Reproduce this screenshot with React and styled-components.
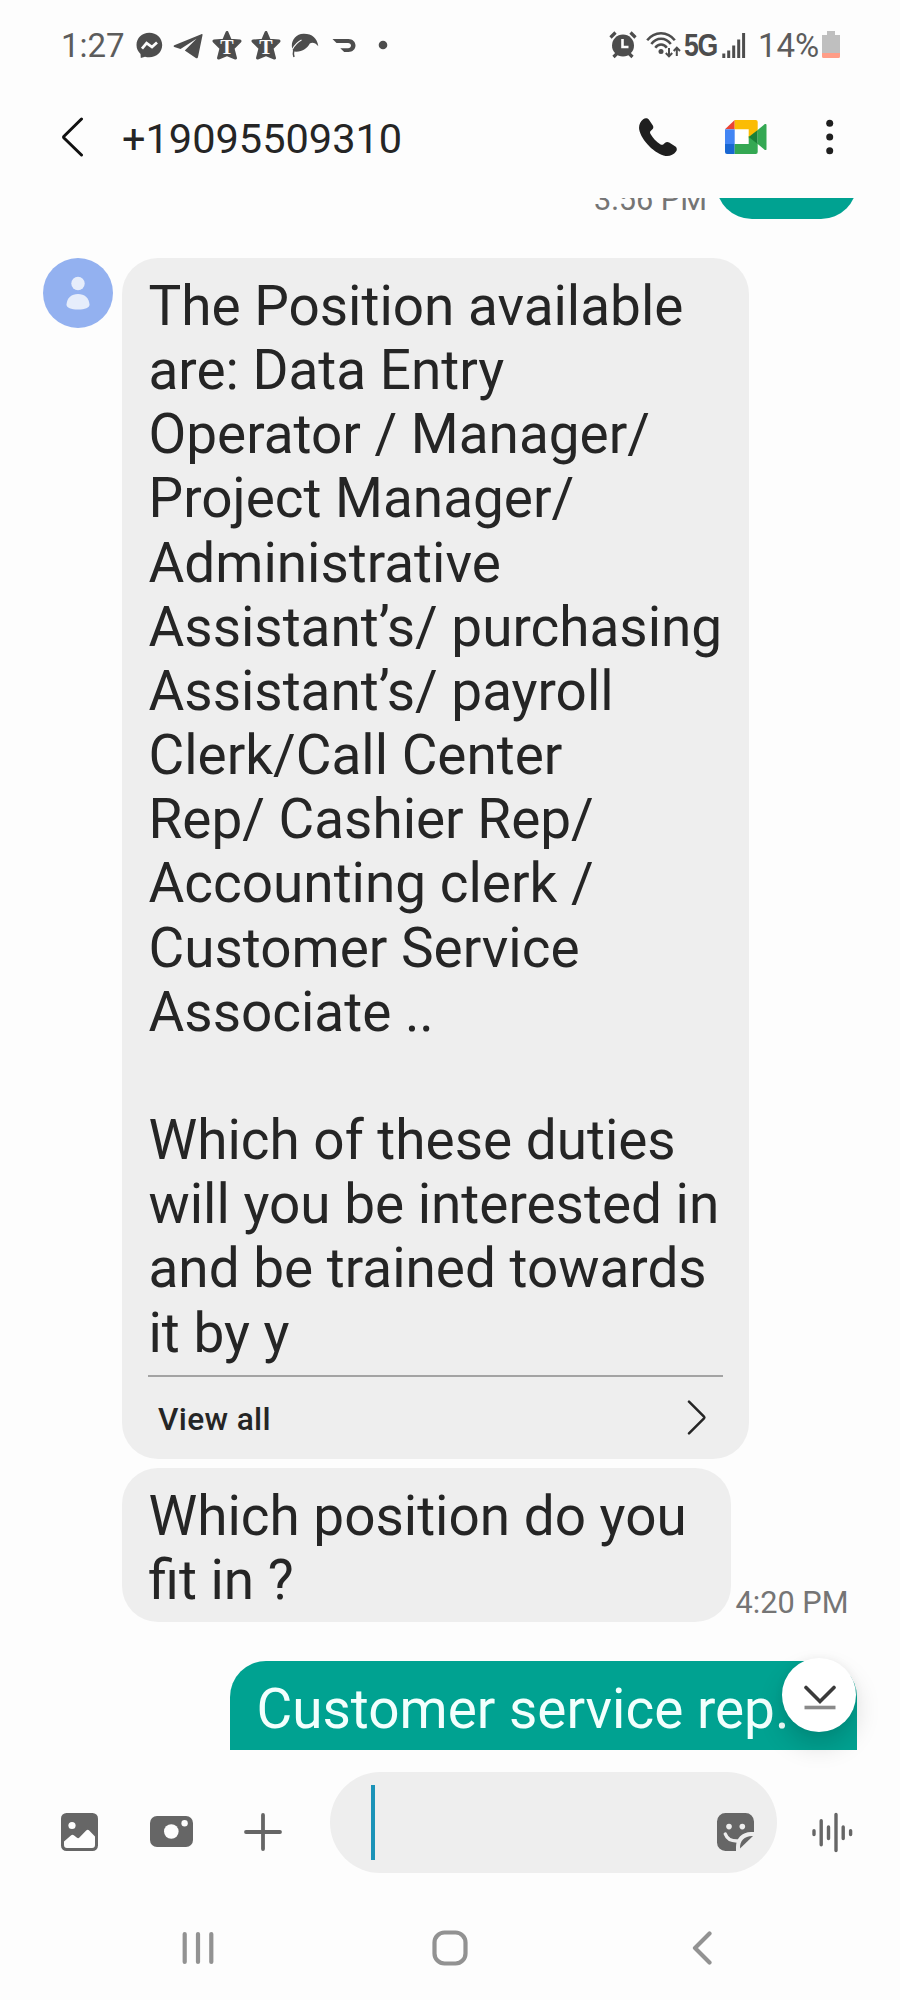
import React from 'react';
import styled, { createGlobalStyle } from 'styled-components';

const GlobalStyle = createGlobalStyle`
  * {
    box-sizing: border-box;
  }

  body {
    margin: 0;
    background: #fdfdfd;
    font-family: Roboto, "Noto Sans", sans-serif;
    color: #252525;
  }

  svg {
    display: block;
    flex: none;
  }
`

const ScreenSC = styled.div`
  display: flex;
  flex-direction: column;
  width: 900px;
  height: 2000px;
  overflow: hidden;
`

const StatusBarSC = styled.div`
  display: flex;
  align-items: center;
  justify-content: space-between;
  height: 90px;
  padding: 0 60px 0 61px;
  color: #4d4d4d;
`

const StatusGroupSC = styled.div`
  display: flex;
  align-items: center;
  gap: ${props => props.$gap}px;
`

const StatusTextSC = styled.span`
  flex: none;
  width: ${props => props.$width}px;
  margin-left: ${props => props.$indent || 0}px;
  font-size: 33px;
  line-height: 38px;
  padding-top: 1px;
  white-space: nowrap;
  color: #5c5c5c;
`

const NetworkSC = styled.span`
  flex: none;
  width: 33px;
  margin-left: -2px;
  padding-top: 1px;
  font-family: "Liberation Sans", Arial, sans-serif;
  font-size: 31px;
  line-height: 38px;
  font-weight: 700;
  letter-spacing: -1.5px;
  white-space: nowrap;

  span {
    display: inline-block;
    transform: scaleX(0.86);
    transform-origin: left;
  }
`

const HeaderSC = styled.header`
  display: flex;
  align-items: center;
  height: 108px;
  padding: 0 65px 14px 61px;
`

const NumberSC = styled.h1`
  flex: 1;
  margin: 0 0 0 38px;
  padding-top: 3px;
  font-size: 41.5px;
  line-height: 48px;
  font-weight: 400;
`

const ActionsSC = styled.div`
  display: flex;
  align-items: center;
  gap: 48px;
`

const ChatSC = styled.main`
  position: relative;
  height: 1552px;
`

const MessagesSC = styled.div`
  display: flex;
  flex-direction: column;
  gap: 39px;
  height: 100%;
  padding: 0 43px;
  overflow: hidden;
`

const SentRowSC = styled.div`
  display: flex;
  flex: none;
  justify-content: flex-end;
  align-items: flex-end;
  gap: 9px;
  height: ${props => props.$visible ? `${props.$visible}px` : "auto"};
`

const ReceivedRowSC = styled.div`
  display: flex;
  flex: none;
  align-items: flex-start;
  gap: 9px;
`

const StackSC = styled.div`
  display: flex;
  flex-direction: column;
  align-items: flex-start;
  gap: 9px;
`

const TimedSC = styled.div`
  display: flex;
  align-items: flex-end;
  gap: 4.5px;
`

const BubbleSC = styled.div`
  width: ${props => props.$width}px;
  min-height: ${props => props.$sent ? 150 : 80}px;
  padding: 16px 26px ${props => props.$flush ? 0 : 10}px;
  border-radius: 36px;
  background: ${props => props.$sent ? "#00a291" : "#eeeeee"};
  color: ${props => props.$sent ? "#f2fffd" : "#252525"};
`

const TextSC = styled.p`
  margin: 0;
  padding-left: 0.5px;
  font-size: 54.9px;
  line-height: 64.15px;
  white-space: pre;
`

const TimeSC = styled.span`
  padding-bottom: 1px;
  font-size: 30.7px;
  line-height: 36px;
  white-space: nowrap;
  color: #757575;
`

const ViewAllSC = styled.div`
  display: flex;
  align-items: center;
  justify-content: space-between;
  height: 84px;
  margin-top: 10px;
  padding: 0 17px 0 10px;
  border-top: 2px solid #a3a3a3;
  font-size: 31.7px;
  line-height: 36px;
  font-weight: 500;
  letter-spacing: 0.35px;

  span {
    padding-top: 5px;
  }
`

const JumpDownSC = styled.button`
  position: absolute;
  right: 44px;
  bottom: 18px;
  display: flex;
  align-items: center;
  justify-content: center;
  width: 74px;
  height: 74px;
  padding: 4px 0 0 1px;
  border: 0;
  border-radius: 50%;
  background: #fff;
  box-shadow: 0 14px 26px rgba(0, 0, 0, 0.15), 0 0 10px rgba(0, 0, 0, 0.05);
`

const ComposerSC = styled.div`
  display: flex;
  align-items: flex-end;
  height: 123px;
  padding: 0 47px 0 61px;
`

const ToolsSC = styled.div`
  display: flex;
  align-items: center;
  gap: 51.5px;
  width: 269px;
  padding-bottom: 22px;
`

const InputSC = styled.div`
  display: flex;
  align-items: flex-end;
  justify-content: space-between;
  width: 447px;
  height: 101px;
  margin-right: 35px;
  padding: 0 23px 22px 41px;
  border-radius: 51px;
  background: #eeeeee;
`

const CaretSC = styled.span`
  width: 4px;
  height: 75px;
  margin-bottom: -9px;
  background: #1b93b8;
`

const VoiceSC = styled.div`
  padding-bottom: 20px;
`

const NavBarSC = styled.nav`
  display: grid;
  grid-template-columns: repeat(3, 252px);
  justify-content: center;
  justify-items: center;
  align-items: center;
  height: 127px;
  padding: 22px 1px 0 0;
`

const POSITIONS = `The Position available
are: Data Entry
Operator / Manager/
Project Manager/
Administrative
Assistant’s/ purchasing
Assistant’s/ payroll
Clerk/Call Center
Rep/ Cashier Rep/
Accounting clerk /
Customer Service
Associate ..

Which of these duties
will you be interested in
and be trained towards
it by y`

const MessengerIcon = () => (
  <svg width="27" height="30" viewBox="0 0 27 30" fill="currentColor">
    <path d="M13.3 2.7C6 2.7.5 8 .5 15c0 3.7 1.6 6.7 4 8.900l.3 4.200 4.200-1.400c1.400.4 2.800.6 4.300.6 7.300 0 12.900-5.300 12.900-12.300S20.600 2.700 13.300 2.700z" />
    <path d="M6 18.700l4.600-5.600 5.400 4 5-4.600" fill="none" stroke="#fdfdfd" strokeWidth="2.700" />
  </svg>
)

const TelegramIcon = () => (
  <svg width="31" height="30" viewBox="-1 0 31 30" fill="currentColor">
    <path d="M28.300 4.200L1.300 15.200c-1 .4-1 1.300 0 1.700l6.200 2 16-10.200L11.800 20.500 22.800 28c1 .6 1.900.3 2.200-1L29.500 5.300c.2-1-.3-1.500-1.200-1.100z" />
  </svg>
)

const StarIcon = () => (
  <svg width="30" height="30" viewBox="0.500 0 30 30" fill="currentColor">
    <path
      d="M15.500 2.500L18.800 10.300l9.700.8-7 7.200 2.500 9.700-8.500-3.400L7 28l2.500-9.700-7-7.200 9.700-.8z"
      stroke="currentColor"
      strokeWidth="3"
      strokeLinejoin="round"
    />
    <text x="15.500" y="24" fill="#fdfdfd" fontFamily="Liberation Serif, serif" fontWeight="700" fontSize="20" textAnchor="middle">T</text>
  </svg>
)

const LeafIcon = () => (
  <svg width="29" height="30" viewBox="0 0 29 30">
    <path d="M3.500 21.500C-1 14 4 4 13.500 3.800 22 3.600 27 8 28.300 16.200 25.500 13 22.500 12 19.800 13.500 17 18.500 12 22.500 3.500 21.500z" fill="currentColor" />
    <path d="M2.200 19.500C5 14.500 7.500 12 11.500 10" fill="none" stroke="#fdfdfd" strokeWidth="1.200" />
    <path d="M4 27c-.8-2.500-.8-4.500-.2-7" fill="none" stroke="currentColor" strokeWidth="1.500" />
  </svg>
)

const DashIcon = () => (
  <svg width="28" height="30" viewBox="-4 0 28 30" fill="currentColor">
    <path d="M.5 9H16.500c4 0 7 2.900 7 6.500S20.500 22 16.500 22H12.200L8.300 18.200H16c1.700 0 3-1 3-2.600 0-1.500-1.300-2.600-3-2.600H4.500z" />
  </svg>
)

const DotIcon = () => (
  <svg width="27" height="30" viewBox="0 0 27 30" fill="currentColor">
    <circle cx="18" cy="15" r="4.300" />
  </svg>
)

const AlarmIcon = () => (
  <svg width="32" height="30" viewBox="0 0 32 30">
    <circle cx="14" cy="15.500" r="11" fill="currentColor" />
    <path d="M1.500 7.500l5-5M26.500 7.500l-5-5M4.500 27l3.500-3.500M23.500 27L20 23.500" stroke="currentColor" strokeWidth="3.200" />
    <path d="M13.500 9v8h6" fill="none" stroke="#fdfdfd" strokeWidth="2.600" />
  </svg>
)

const WifiIcon = () => (
  <svg width="35" height="30" viewBox="0 0 35 30" fill="none" stroke="currentColor" strokeWidth="2.500">
    <path d="M1.200 10.200C8.500.8 21.500.8 28.800 10.200M5.300 14c5.300-7 14.200-7 19.500 0M9.300 17.800c3-4.300 8.500-4.300 11.500 0" />
    <circle cx="15" cy="21.500" r="2.500" fill="currentColor" stroke="none" />
    <path d="M23 18v8M19.800 23l3.200 3.400 3.200-3.400M30.800 26v-8M27.700 21l3.100-3.400L34 21" strokeWidth="2" />
  </svg>
)

const SignalIcon = () => (
  <svg width="24" height="30" viewBox="0 0 24 30" stroke="currentColor" strokeWidth="3">
    <path d="M1.800 23.500V28M6.700 20.500V28M11.700 15.500V28M16.700 9.500V28M21.600 3V28" />
  </svg>
)

const BatteryIcon = () => (
  <svg width="18" height="30" viewBox="0 0 18 30">
    <path d="M5 1h8v4h5v19H0V5h5z" fill="#bfbfbf" />
    <path d="M0 23h18v3.500a1.500 1.500 0 0 1-1.500 1.500h-15A1.500 1.500 0 0 1 0 26.500z" fill="#ff9d87" />
  </svg>
)

const BackIcon = () => (
  <svg width="23" height="40" viewBox="0 0 23 40" fill="none" stroke="#111" strokeWidth="3" strokeLinecap="round" strokeLinejoin="round">
    <path d="M20.500 2L3 19.200q-.8.900 0 1.800L20.500 38" />
  </svg>
)

const PhoneIcon = () => (
  <svg width="38" height="39" viewBox="0 0 38 39" fill="#1f1f1f">
    <path d="M4.200 1.200C6-.2 8.600 0 9.800 1.600l3.900 5.600c1 1.600.8 3.100-.5 4.300l-1.800 1.700c-.5.700-.5 1.500 0 2.500 2.300 4.200 5.900 8 10.200 10.700 1 .6 1.800.6 2.600 0l1.900-1.600c1.200-1.100 2.700-1.200 4.100-.2l6.200 4c1.600 1.200 1.900 3.400.6 5-2.400 3.400-6 4.800-10.400 4.400C16 36 2 22 .2 11.400-.4 7.200 1 3.600 4.200 1.200z" />
  </svg>
)

const MeetIcon = () => (
  <svg width="42" height="34" viewBox="0 0 42 34">
    <path d="M9.700 9h14v15h-14z" fill="#fff" />
    <path d="M0 9.300L9.700 0v9.300z" fill="#ea4335" />
    <path d="M0 9.300h9.700V24H0z" fill="#4285f4" />
    <path d="M0 24h9.700v10H2a2 2 0 0 1-2-2z" fill="#1967d2" />
    <path d="M9.700 0h21a2 2 0 0 1 2 2v10l-9 6.500V9.300h-14z" fill="#fbbc04" />
    <path d="M9.700 24h14v-8l9 7v9a2 2 0 0 1-2 2h-21z" fill="#34a853" />
    <path d="M23.700 17l9-7v14z" fill="#188038" />
    <path d="M32.700 10l6.800-5.700c1-.8 2-.4 2 .8v23.800c0 1.200-1 1.600-2 .8L32.700 24z" fill="#34a853" />
  </svg>
)

const MoreIcon = () => (
  <svg width="20" height="36" viewBox="-11 0 20 36" fill="#1f1f1f">
    <circle cx="3.700" cy="4.300" r="3.500" />
    <circle cx="3.700" cy="18" r="3.500" />
    <circle cx="3.700" cy="31.700" r="3.500" />
  </svg>
)

const Avatar = () => (
  <svg width="70" height="70" viewBox="0 0 70 70">
    <circle cx="35" cy="35" r="35" fill="#93b1f0" />
    <circle cx="35" cy="25.500" r="6.700" fill="#e6edfb" />
    <path d="M23.500 46.500C24 40 28.500 36 35 36s11 4 11.500 10.500c0 3.500-4.500 5-11.500 5s-11.500-1.500-11.500-5z" fill="#e6edfb" />
  </svg>
)

const ChevronIcon = () => (
  <svg width="19" height="35" viewBox="0 0 19 35" fill="none" stroke="#252525" strokeWidth="2.500" strokeLinecap="round" strokeLinejoin="round">
    <path d="M2 1.700l15 15q.7.800 0 1.600L2 33.300" />
  </svg>
)

const JumpIcon = () => (
  <svg width="32" height="25" viewBox="0 0 32 25" fill="none">
    <path d="M2 2.500L16 16.500 30 2.500" stroke="#3a3a3a" strokeWidth="3.600" strokeLinecap="round" />
    <path d="M.5 22.500h31" stroke="#8a8a8a" strokeWidth="3.600" />
  </svg>
)

const GalleryIcon = () => (
  <svg width="37" height="38" viewBox="0 0 37 38">
    <rect width="37" height="38" rx="5.500" fill="#666" />
    <circle cx="11" cy="12.500" r="3.600" fill="#fdfdfd" />
    <path d="M3 28.500l7.200-6.200q1.300-1 2.600 0l3.200 2.500q1.300.8 2.400-.3l6.800-7q1.500-1.500 3 0l5.800 6V32a3 3 0 0 1-3 3H6a3 3 0 0 1-3-3z" fill="#fdfdfd" />
  </svg>
)

const CameraIcon = () => (
  <svg width="43" height="38" viewBox="0 0 43 38">
    <rect y="3" width="43" height="31" rx="7" fill="#666" />
    <circle cx="21.300" cy="18.500" r="7.300" fill="#fdfdfd" />
    <circle cx="34.600" cy="10.300" r="3.200" fill="#fdfdfd" />
  </svg>
)

const PlusIcon = () => (
  <svg width="38" height="38" viewBox="0 0 38 38" stroke="#666" strokeWidth="3.800" strokeLinecap="round">
    <path d="M19 2v34M2 19h34" />
  </svg>
)

const StickerIcon = () => (
  <svg width="37" height="38" viewBox="0 0 37 38">
    <path d="M8.500 0h20A8.500 8.500 0 0 1 37 8.500V19h-3C25 19 19 25.500 19 34v4H8.500A8.500 8.500 0 0 1 0 29.500v-21A8.500 8.500 0 0 1 8.500 0z" fill="#666" />
    <path d="M36 23L23 35.500C22.500 28 27.500 22.700 36 23z" fill="#666" />
    <circle cx="12" cy="13.600" r="2.800" fill="#eee" />
    <circle cx="25.300" cy="13.600" r="2.800" fill="#eee" />
    <path d="M8.300 21c1.700 4.700 5.500 7.200 12.200 7" fill="none" stroke="#eee" strokeWidth="3.400" strokeLinecap="round" />
  </svg>
)

const VoiceIcon = () => (
  <svg width="41" height="41" viewBox="0 0 41 41" stroke="#666" strokeWidth="3.400" strokeLinecap="round">
    <path d="M2 18.800v3.800M9.200 8.700v24M16.500 15v11.500M24 2.500v36M31.200 15v11.500M38.600 18.800v3.800" />
  </svg>
)

const RecentsIcon = () => (
  <svg width="32" height="34" viewBox="0 0 32 34" stroke="#929292" strokeWidth="4.200" strokeLinecap="round">
    <path d="M2.700 3v28M16 3v28M29.300 3v28" />
  </svg>
)

const HomeIcon = () => (
  <svg width="36" height="36" viewBox="0 0 36 36">
    <rect x="2.500" y="2.500" width="31" height="31" rx="10" fill="none" stroke="#929292" strokeWidth="4.200" />
  </svg>
)

const NavBackIcon = () => (
  <svg width="20" height="34" viewBox="0 0 20 34" fill="none" stroke="#929292" strokeWidth="4.200" strokeLinecap="round" strokeLinejoin="round">
    <path d="M17.500 2.500L3 17l14.500 14.500" />
  </svg>
)

function StatusBar() {
  return (
    <StatusBarSC>
      <StatusGroupSC $gap={9}>
        <StatusTextSC $width={66}>1:27</StatusTextSC>
        <MessengerIcon />
        <TelegramIcon />
        <StarIcon />
        <StarIcon />
        <LeafIcon />
        <DashIcon />
        <DotIcon />
      </StatusGroupSC>
      <StatusGroupSC $gap={5}>
        <AlarmIcon />
        <WifiIcon />
        <NetworkSC><span>5G</span></NetworkSC>
        <SignalIcon />
        <StatusTextSC $width={59} $indent={7}>14%</StatusTextSC>
        <BatteryIcon />
      </StatusGroupSC>
    </StatusBarSC>
  )
}

export default function App() {
  return (
    <ScreenSC>
      <GlobalStyle />
      <StatusBar />

      <HeaderSC>
        <BackIcon />
        <NumberSC>+19095509310</NumberSC>
        <ActionsSC>
          <PhoneIcon />
          <MeetIcon />
          <MoreIcon />
        </ActionsSC>
      </HeaderSC>

      <ChatSC>
        <MessagesSC>
          <SentRowSC $visible={21}>
            <TimeSC>3:56 PM</TimeSC>
            <BubbleSC $sent $width={141} />
          </SentRowSC>

          <ReceivedRowSC>
            <Avatar />
            <StackSC>
              <BubbleSC $width={627} $flush>
                <TextSC>{POSITIONS}</TextSC>
                <ViewAllSC>
                  <span>View all</span>
                  <ChevronIcon />
                </ViewAllSC>
              </BubbleSC>
              <TimedSC>
                <BubbleSC $width={609}>
                  <TextSC>{"Which position do you\nfit in ?"}</TextSC>
                </BubbleSC>
                <TimeSC>4:20 PM</TimeSC>
              </TimedSC>
            </StackSC>
          </ReceivedRowSC>

          <SentRowSC>
            <BubbleSC $sent $width={627}>
              <TextSC>Customer service rep.</TextSC>
            </BubbleSC>
          </SentRowSC>
        </MessagesSC>
        <JumpDownSC aria-label="Jump to latest">
          <JumpIcon />
        </JumpDownSC>
      </ChatSC>

      <ComposerSC>
        <ToolsSC>
          <GalleryIcon />
          <CameraIcon />
          <PlusIcon />
        </ToolsSC>
        <InputSC>
          <CaretSC />
          <StickerIcon />
        </InputSC>
        <VoiceSC>
          <VoiceIcon />
        </VoiceSC>
      </ComposerSC>

      <NavBarSC>
        <RecentsIcon />
        <HomeIcon />
        <NavBackIcon />
      </NavBarSC>
    </ScreenSC>
  )
}
